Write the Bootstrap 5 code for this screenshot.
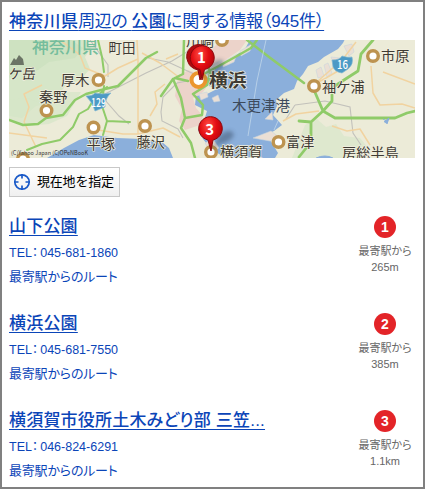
<!DOCTYPE html>
<html lang="ja">
<head>
<meta charset="utf-8">
<meta name="viewport" content="width=device-width, initial-scale=1">
<title>神奈川県周辺の公園に関する情報</title>
<link href="https://cdn.jsdelivr.net/npm/bootstrap@5.3.0/dist/css/bootstrap.min.css" rel="stylesheet">
<style>
body{font-family:"Liberation Sans","Noto Sans CJK JP",sans-serif;font-feature-settings:"palt";background:#fff}
.panel{height:489px;border:2px solid #808080;padding:0 7px;white-space:nowrap}
a{color:#0b45b8}
.heading{height:38px;padding-top:9px;font-size:17px;line-height:22px}
.heading a,.place a{text-decoration:underline;text-decoration-thickness:1px;text-underline-offset:3px}
.heading b{font-weight:500;letter-spacing:.3px}
.w1{letter-spacing:-.5px}.w2{letter-spacing:-.18px}
.map{width:406px;height:118px;display:block}
.map text{font-family:"Noto Sans CJK JP",sans-serif;font-feature-settings:normal}
.locate{margin-top:9px;width:111px;height:30px;border:1px solid #c8c8c8;border-radius:0;padding:0 0 0 3px;font-size:13px;letter-spacing:-.2px;color:#000;background:linear-gradient(#fff,#f0f0f0)}
.loctext{margin-left:6px}
.entries{margin-top:17px}
.entry{height:97px}
.entry:last-child{height:72px}
.place{font-size:17px;line-height:24px;height:27px;padding-top:1px;letter-spacing:.2px;font-weight:500}
.tel{font-size:12.5px;line-height:24px;height:24px}
.phone{margin-left:2px}
.route{font-size:13px;line-height:23px;height:23px;letter-spacing:-.2px}
.tel a,.route a{text-decoration:none}
.side{width:60px;margin-right:1px;padding-top:2px;color:#666;font-size:11px;line-height:16px}
.num{width:22px;height:22px;background:#e32428;font-size:14px;font-weight:700;margin-bottom:5px}
</style>
</head>
<body>
<main class="panel">
<h1 class="heading m-0 fw-normal"><a href="#"><b>神奈川県</b><span class="w1">周辺の </span><b>公園</b><span class="w2">に関する情報（945件）</span></a></h1>
<svg class="map" viewBox="9 40 406 118" role="img" aria-label="地図">
<defs>
<radialGradient id="red" cx=".4" cy=".25" r=".8"><stop offset="0" stop-color="#ff4a42"/><stop offset=".45" stop-color="#e20c12"/><stop offset="1" stop-color="#980008"/></radialGradient>
<filter id="soft" x="-50%" y="-50%" width="200%" height="200%"><feGaussianBlur stdDeviation="2"/></filter>
</defs>
<path fill="#ecebd8" d="M9 40h406v118H9z"/>
<path fill="#d6e6c8" d="M9 40h76l6 8-6 9 5 12-10 11-15 6-12 17-17 3-14 12-13-2z"/>
<path fill="#c8e0bd" d="M9 40h62l12 8-8 10-26 4-14 10-10-3-16 9z" opacity=".6"/>
<path fill="#d6e6c8" d="M9 100l18-2 20 8 20-14 14 0-14 24-18 8-22 2-18-6z" opacity=".7"/>
<path fill="#d9e7ca" d="M305 125l12-6 9 8 10-3 8 12 16 2 10 12-6 8h-72z" opacity=".7"/>
<path fill="#ecd3ca" d="M178 77l10-7 14 5 8 7-7 10-10 6 3 10 7 8-3 9-15 5-6-9 3-12-7-13zM208 52l14-12h25l-7 10-19 13-8 4z"/>
<path fill="#8bafdb" d="M47 158l17-10 15-8 15-5 23 3 25 1 20 3 7 6 4 10z"/>
<path fill="#8bafdb" d="M250 40l-5 9-13 9-15 9-10 11 2 8 8 3-10 5-11 2-1 9 12 6-3 10-6 9 5 9 7 9 15 10h50l3-5-8-13-10-3 14-6 8-6-9-10 4-9-1-6 8-7 10-4 3-8 6-7 5-8 10-4 6-5 14-8 5-6 4-8 5-10z"/>
<g fill="#eadfd5" stroke="#c9d5dd" stroke-width=".6"><path d="M208 68l14-8-3 6-12 9zM223 62l14-8-3 8-11 5zM240 51l12-7-2 7-9 5zM199 94l8-2 1 5-7 3zM212 98l6-3 2 6-6 1zM205 143l8-4 6 9-8 5zM316 70l5-3 3 9-6 2zM324 65l4-2 4 10-5 4zM331 57l9 1 3 10-7 4zM344 46l8-2 2 8-5 4zM265 119l7-7 1 8zM253 138l18-7 9 7-10 3z"/></g>
<g fill="none" stroke="#c2c1bb" stroke-width="1.1">
<path d="M101 96l45-23 26-12 23-14M148 58l20 4 26 12 16 8M90 40l18 25 0 12M161 112l2-15 14-14 10-2M161 112l1 9 16 8 5 9M295 105l30-4 25 6 3 26 8 12M295 105l-9 14M105 100l14 16 10 8"/>
</g>
<g fill="none" stroke="#f1d3a0" stroke-width="1.5" stroke-linejoin="round">
<path d="M60 40l20 15 5 13 20 8 13-8 20-9M138 59l-1-19M138 59l0 75M138 134l-15 0-25-4-6-9M138 134l25-6 17 9M142 53l18 10 20 15M178 54l-12 5M24 122l5-15-5-13 18-9M24 122l12 25M9 133l38 5M356 42l-13 17-25 22M371 66l2 27 7 12 22-1 13 4M311 86l15-8 24-14M283 121l13-7 23-3M332 126l15 5 13-2 10 16M383 72l32 12M150 116l7-12-2-12 10-8"/>
</g>
<g fill="none" stroke="#8fcb69" stroke-width="2.500" stroke-linecap="round" stroke-linejoin="round">
<path d="M9 120l14 5 15-1 8-6 17-3 12-15 11-6 19-5 13-3 28-28 11-6"/>
<path stroke-width="2" d="M27 150l15-6 18-4 13-13 6-13 9-5 6-10 13-12M98 40l4 17 2 15M104 86l-2 20 5 15 23 1M107 121l-4 14"/>
<path d="M184 40l-1 34-10 5-12 17M173 79l8 19 4 20-4 10 10 15 4 15M175 78l13 3M185 118l17-3 1-10-10-11 14-9 3-12-3-12M200 76l17-9 20-11 14-8 6-8M247 40l22 17 35 26"/>
<path stroke-width="2.800" d="M314 90l9 21 12 7 60 0 12-5 8-2M323 111l9-10 0-13 12-8 14-9 3-17 12-14M323 111l-12 11-12-1M311 122l0 20-12 15"/>
</g>
<path d="M266 40l-9 41-9 55M278 121l-4 9" fill="none" stroke="#c9dced" stroke-width=".7"/>
<path d="M384 122l5-4-2 6m-4-5l5 3M316 158q9-4 17 0" fill="#8bafdb" stroke="#8bafdb"/>
<g fill="#fff" stroke="#bd9350" stroke-width="3.4"><circle cx="98.500" cy="80" r="5.300"/><circle cx="46.500" cy="110.500" r="5.300"/><circle cx="93.500" cy="127.500" r="5.300"/><circle cx="145" cy="126" r="5.300"/><circle cx="222" cy="40" r="5.300"/><circle cx="211" cy="152" r="5.300"/><circle cx="373" cy="56" r="5.300"/><circle cx="314" cy="86" r="5.300"/><circle cx="278.500" cy="142" r="5.300"/><circle cx="23" cy="159" r="5.300"/></g>
<circle cx="198.500" cy="80" r="7" fill="#fff" stroke="#eb962e" stroke-width="4"/>
<path fill="#6b7465" d="M10 65l4-7 2 2 3-5 4 4 1 6z"/>
<g fill="#4c9ac5" stroke="#83b8d0" stroke-width=".7"><path d="M89 96q7 0 9-3 7 2 16 0 -6 5-6 14l-10 4q-2-8-9-15z" transform="translate(-3 0)"/><path d="M332 60q8 0 10-4 6 2 10 1 2 7-4 12l-6 4q-7-1-9-6z"/></g>
<g fill="#fff" font-weight="500"><text x="91" y="107" font-size="12" textLength="15" lengthAdjust="spacingAndGlyphs">129</text><text x="337" y="69" font-size="12" textLength="11" lengthAdjust="spacingAndGlyphs">16</text></g>
<text x="32" y="53" font-size="16.700" font-weight="500" fill="#75bd9c">神奈川県</text>
<g fill="#3f3b34" stroke="#f1efdf" stroke-width="1.300" paint-order="stroke" font-size="14.200">
<text x="108.500" y="52.500" font-size="13.500">町田</text><text x="61" y="85">厚木</text><text x="39" y="102">秦野</text><text x="86.500" y="149">平塚</text><text x="136.500" y="147">藤沢</text>
<text x="186" y="46">川崎</text><text x="381" y="61">市原</text><text x="322" y="91.500">袖ケ浦</text><text x="286" y="147">富津</text>
<text x="9" y="79" font-size="14" textLength="27" transform="skewX(-7) translate(9 0)" lengthAdjust="spacingAndGlyphs">ケ岳</text>
<text x="342" y="158">房総半島</text><text x="220" y="157">横須賀</text>
<text x="209" y="86.500" font-size="18.700" font-weight="700">横浜</text></g>
<text x="232" y="111" fill="#3c4a5c" font-size="14.500">木更津港</text>
<text x="11" y="155" font-size="5.500" fill="#333" textLength="77">(C)Yahoo Japan (C)OPeNBooK</text>
<g fill="#26384e" opacity=".4" filter="url(#soft)"><path d="M202 81l8-17q12-9 14 0-2 8-13 9zM211 151l8-15q12-10 15-1-3 7-14 9z"/></g>
<g stroke="#8c080d" stroke-width="1"><path fill="#b30b10" d="M188 62a12 12 0 0 1 18-15l-3 24-3 9-2-10q-8-2-10-8z"/><path fill="url(#red)" d="M202 80l-2-10.500a12 12 0 1 1 4.500 0z"/><path fill="url(#red)" d="M211 151l-3-11a11.800 11.800 0 1 1 5 0z"/></g>
<g fill="#fff" text-anchor="middle" font-size="15" font-weight="700"><text x="201.500" y="62.500">1</text><text x="209.800" y="134.500">3</text></g>
</svg>
<button class="locate btn d-flex align-items-center" type="button">
<svg width="18" height="18" viewBox="0 0 18 18" fill="none" stroke="#1959c8"><circle cx="9" cy="9" r="7.200" stroke-width="1.700"/><path stroke-width="1.700" d="M9 1v4.500M9 12.500v4.500M1 9h4.500M12.500 9h4.500"/></svg><span class="loctext">現在地を指定</span></button>
<section class="entries">
<article class="entry d-flex justify-content-between"><div><h2 class="place m-0"><a href="#">山下公園</a></h2><div class="tel"><a href="#">TEL：<span class="phone">045-681-1860</span></a></div><div class="route"><a href="#">最寄駅からのルート</a></div></div><div class="side text-center"><div class="num rounded-circle text-white d-flex align-items-center justify-content-center mx-auto">1</div><div>最寄駅から</div><div>265m</div></div></article>
<article class="entry d-flex justify-content-between"><div><h2 class="place m-0"><a href="#">横浜公園</a></h2><div class="tel"><a href="#">TEL：<span class="phone">045-681-7550</span></a></div><div class="route"><a href="#">最寄駅からのルート</a></div></div><div class="side text-center"><div class="num rounded-circle text-white d-flex align-items-center justify-content-center mx-auto">2</div><div>最寄駅から</div><div>385m</div></div></article>
<article class="entry d-flex justify-content-between"><div><h2 class="place m-0"><a href="#">横須賀市役所土木みどり部 三笠...</a></h2><div class="tel"><a href="#">TEL：<span class="phone">046-824-6291</span></a></div><div class="route"><a href="#">最寄駅からのルート</a></div></div><div class="side text-center"><div class="num rounded-circle text-white d-flex align-items-center justify-content-center mx-auto">3</div><div>最寄駅から</div><div>1.1km</div></div></article>
</section>
</main>
<script src="https://cdn.jsdelivr.net/npm/bootstrap@5.3.0/dist/js/bootstrap.bundle.min.js"></script>
</body>
</html>
